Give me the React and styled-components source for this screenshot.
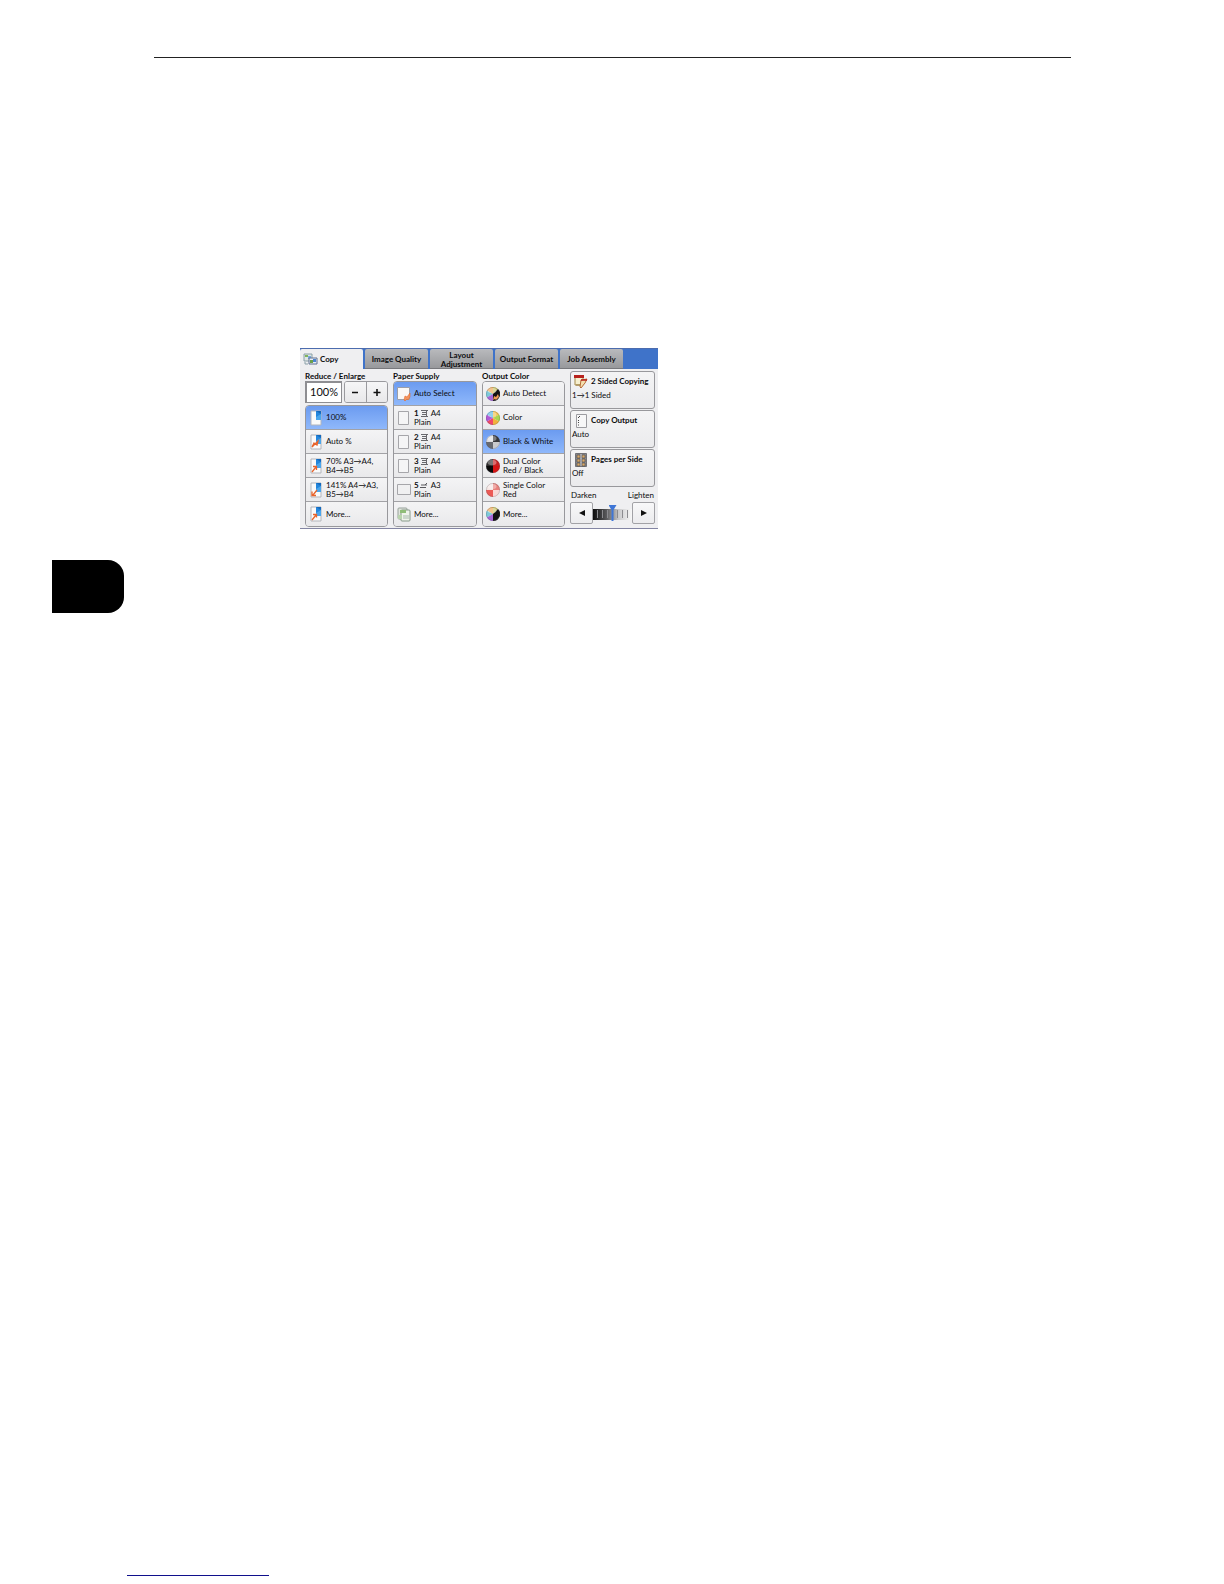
import { useState } from "react";
import styled, { createGlobalStyle, css } from "styled-components";

const GlobalStyle = createGlobalStyle`
  *,
  *::before,
  *::after {
    box-sizing: border-box;
  }

  body {
    margin: 0;
    background: #fff;
    color: #0c0c0e;
    font-family: "Lato", "Noto Sans", sans-serif;
  }

  button,
  input {
    margin: 0;
    font: inherit;
    color: inherit;
  }
`;

const Page = styled.div`
  display: flex;
  flex-direction: column;
  min-height: 100vh;
`;

const TopRule = styled.hr`
  align-self: stretch;
  height: 1px;
  margin: 57px 153px 0 154px;
  border: 0;
  background: #222;
`;

const Main = styled.main`
  flex: 1;
  padding-top: 290px;
`;

const ChapterTab = styled.aside`
  width: 72px;
  height: 53px;
  margin: 31px 0 0 52px;
  border-radius: 0 16px 16px 0;
  background: #000;
`;

const BottomRule = styled.hr`
  width: 142px;
  height: 1px;
  margin: 0 0 8px 127px;
  border: 0;
  background: #10108c;
`;

const Panel = styled.section`
  width: calc(100% - 300px);
  max-width: 358px;
  margin-left: 300px;
  border-top: 1px solid #4c6cae;
  border-bottom: 1px solid #8385a3;
  background: #efeff1;
  font-size: 8px;
  line-height: 9px;
`;

const TabBar = styled.div`
  display: flex;
  gap: 2px;
  background: #3f73c9;
`;

const Tab = styled.button`
  display: flex;
  align-items: center;
  justify-content: center;
  gap: 2px;
  width: 63px;
  height: 20px;
  padding: 2px 0 0;
  border: 0;
  border-bottom: 1px solid #77787c;
  border-radius: 2px 2px 0 0;
  background: linear-gradient(#b9babd, #98999c);
  font-weight: 700;

  ${(props) =>
    props.$active &&
    css`
      justify-content: flex-start;
      padding-left: 3px;
      border-bottom-color: #efeff1;
      background: #efeff1;
    `}
`;

const Body = styled.div`
  display: grid;
  grid-template-columns: 83px 84px 83px 1fr;
  gap: 5px;
  padding: 2px 3px 1px 5px;
`;

const Column = styled.div`
  display: flex;
  flex-direction: column;
  min-width: 0;
`;

const ColumnTitle = styled.h2`
  margin: 0;
  font-size: 8px;
  line-height: 10px;
  font-weight: 700;
  white-space: nowrap;
`;

const OptionList = styled.div`
  overflow: hidden;
  border: 1px solid #98989c;
  border-radius: 4px;
`;

const Option = styled.button`
  display: grid;
  grid-template-columns: 14px 1fr;
  align-items: center;
  gap: 3px;
  width: 100%;
  height: 24px;
  padding: 0 0 0 3px;
  border: 0;
  border-bottom: 1px solid #a2a2a6;
  background: linear-gradient(#f4f4f5, #e9e9eb);
  text-align: left;
  white-space: nowrap;

  &:last-child {
    border-bottom: 0;
  }

  ${(props) =>
    props.$selected &&
    css`
      background: linear-gradient(#6b9bf0, #8fb8fb);
    `}

  svg {
    display: block;
    justify-self: center;
  }
`;

const TrayLine = styled.span`
  display: flex;
  align-items: center;
  gap: 1px;
  font-weight: 700;
`;

const TraySize = styled.span`
  margin-left: 2px;
  font-weight: 400;
`;

const ZoomControls = styled.div`
  display: flex;
  gap: 2px;
  margin-bottom: 2px;
`;

const ZoomInput = styled.input`
  width: 37px;
  height: 22px;
  padding: 0 0 2px;
  border: 2px solid #8e8e92;
  border-right-width: 1px;
  border-bottom-width: 1px;
  background: #fff;
  font-size: 11px;
  text-align: center;
`;

const Stepper = styled.div`
  display: flex;
  flex: 1;
  overflow: hidden;
  border: 1px solid #9a9a9e;
  border-radius: 3px;
`;

const StepButton = styled.button`
  flex: 1;
  padding: 0;
  border: 0;
  background: linear-gradient(#f6f6f7, #e8e8ea);

  & + & {
    border-left: 1px solid #9a9a9e;
  }

  svg {
    display: block;
    margin: 0 auto;
  }
`;

const Cards = styled.div`
  display: flex;
  flex-direction: column;
  gap: 1px;
`;

const Card = styled.button`
  display: flex;
  flex-direction: column;
  gap: 2px;
  height: 38px;
  padding: 2px 1px;
  border: 1px solid #98989c;
  border-radius: 3px;
  background: linear-gradient(#f4f4f5, #ebebed);
  text-align: left;
  white-space: nowrap;
`;

const CardTitle = styled.span`
  display: flex;
  align-items: center;
  gap: 3px;
  height: 15px;
  padding-left: 2px;
  font-weight: 700;
`;

const DensityLabels = styled.div`
  display: flex;
  justify-content: space-between;
  margin: 4px 1px 2px;
`;

const Density = styled.div`
  display: flex;
  align-items: center;
`;

const DensityButton = styled.button`
  flex: none;
  width: 23px;
  height: 22px;
  padding: 0;
  border: 1px solid #a2a2a6;
  border-radius: 2px;
  background: linear-gradient(#f8f8f9, #ececee);

  svg {
    display: block;
    margin: 0 auto;
  }
`;

const DensitySlider = styled.input`
  appearance: none;
  flex: 1;
  min-width: 0;
  height: 16px;
  margin: 0;
  background:
    repeating-linear-gradient(90deg, transparent 0 4px, #8b8b8f 4px 5px) 0 5px / 100% 8px no-repeat,
    linear-gradient(90deg, #0c0c0c, #5a5a5c 35%, #c8c8ca 65%, #f8f8f8) 0 4px / 100% 11px no-repeat;

  &::-webkit-slider-thumb {
    appearance: none;
    width: 8px;
    height: 16px;
    background: #3f76d6;
    clip-path: polygon(0 0, 100% 0, 5px 5px, 5px 100%, 3px 100%, 3px 5px);
  }
`;

const CopyIcon = () => (
  <svg width="15" height="13" viewBox="0 0 15 13">
    <path d="M1 1h8v7H1z" fill="#dfe6e4" stroke="#8aa0a8" />
    <path d="M2 2h3v2H2z" fill="#7fb35b" />
    <path d="M5 3h3v3H5z" fill="#78a9df" />
    <path d="M6 5h8v6H6z" fill="#e9eef5" stroke="#60718f" />
    <path d="M7 7h3v3H7z" fill="#6da04b" />
    <path d="M10 6h3v3h-3z" fill="#4c86d3" />
    <path d="M2 9v2h3" fill="none" stroke="#8aa0a8" />
  </svg>
);

const arrows = {
  auto: "M2 13l2-4 1 1 3-3-1 4-2-1z",
  reduce: "M2 14l4-5M3 8.500h3.500v3.500",
  enlarge: "M7 8l-4 5M2 9.500v4h4",
  more: "M2 14l4-5M3 8.500h3.500v3",
};

const SizeIcon = ({ kind }) => (
  <svg width="12" height="16" viewBox="0 0 12 16">
    <path d="M1 1h10v14H1z" fill="#fafafa" stroke="#b3b5bb" />
    <path d="M6 1h5v9H6z" fill="#2486dc" />
    <path d="M6 1h5v3z" fill="#1469bd" />
    <path d="M6 7l5-3v6H6z" fill="#4aa6ec" />
    {kind && (
      <path d={arrows[kind]} fill={kind === "auto" ? "#f6a06c" : "none"} stroke="#e8642c" strokeWidth="1.3" />
    )}
  </svg>
);

const PaperIcon = ({ kind }) => {
  if (kind === "landscape") {
    return (
      <svg width="14" height="12" viewBox="0 0 14 12">
        <path d="M.5 .5h13v10H.5z" fill="#f0f0f1" stroke="#a6a6aa" />
      </svg>
    );
  }
  if (kind === "more") {
    return (
      <svg width="14" height="15" viewBox="0 0 14 15">
        <rect x="1" y="1" width="9" height="11" rx="1" fill="#dfe5dc" stroke="#97a09a" />
        <rect x="4" y="3" width="9" height="11" rx="1" fill="#eef3ea" stroke="#87998a" />
        <path d="M3 3h6v3H3z" fill="#8fbd78" />
        <path d="M6 9h6M6 11h6" stroke="#a9b9ae" />
        <path d="M1 8h4v4H1z" fill="#b9d4ad" />
      </svg>
    );
  }
  if (kind === "auto") {
    return (
      <svg width="14" height="16" viewBox="0 0 14 16">
        <path d="M.5 1.500h12v12H.5z" fill="#faf8f6" stroke="#9b9ea9" />
        <path d="M7 14l1-4 2 1 3-4v4l-2 3-1-1-2 2z" fill="#f4935c" stroke="#e46a2e" strokeWidth=".6" />
      </svg>
    );
  }
  return (
    <svg width="12" height="14" viewBox="0 0 12 14">
      <path d="M.5 .5h10v13H.5z" fill="#f5f5f6" stroke="#a6a6aa" />
    </svg>
  );
};

const TrayGlyph = ({ flat }) => (
  <svg width="8" height="7" viewBox="0 0 8 7">
    {flat ? (
      <path d="M1 3h6M0 5.500h6M7 1L5 3" stroke="#58585c" fill="none" />
    ) : (
      <path d="M1 .5h7M2 2.500h5M2 4.500h5M1 6.500h7M6.500 0v7" stroke="#68686c" fill="none" />
    )}
  </svg>
);

// quarters run clockwise from the top right
const pies = {
  bw: ["#36373b", "#c9cacd", "#67696f", "#dcdde0"],
  dual: ["#c82020", "#d81414", "#090909", "#2d2b2b"],
  single: ["#e8807c", "#f8d9d7", "#ec5a56", "#f6e4e2"],
};

const quarters = ["M7 7V0A7 7 0 0 1 14 7z", "M7 7h7A7 7 0 0 1 7 14z", "M7 7v7A7 7 0 0 1 0 7z", "M7 7H0A7 7 0 0 1 7 0z"];

const wedges = [
  ["M7 7V0A7 7 0 0 1 13.1 3.500z", "#f2c04c"],
  ["M7 7l6.100-3.500A7 7 0 0 1 13.100 10.500z", "#a8d650"],
  ["M7 7l6.100 3.500A7 7 0 0 1 7 14z", "#f2b23c"],
  ["M7 7v7A7 7 0 0 1 .9 10.500z", "#f0486a"],
  ["M7 7L.9 10.500A7 7 0 0 1 .9 3.500z", "#b05ad6"],
  ["M7 7L.9 3.500A7 7 0 0 1 7 0z", "#58b6e4"],
];

const darkHalf = [
  ["M7 7V0A7 7 0 0 0 .9 3.500z", "#f0a650"],
  ["M7 7L.9 3.500A7 7 0 0 0 .9 10.500z", "#7ec9d8"],
  ["M7 7L.9 10.500A7 7 0 0 0 7 14z", "#a666d8"],
  ["M7 7l5-5A7 7 0 0 0 7 0z", "#c9c468"],
  ["M7 7l5-5A7 7 0 0 1 7 14z", "#121214"],
];

const ColorIcon = ({ kind }) => {
  const parts = pies[kind]
    ? quarters.map((d, i) => [d, pies[kind][i]])
    : kind === "color"
      ? wedges
      : darkHalf;
  return (
    <svg width="14" height="14" viewBox="0 0 14 14">
      {parts.map(([d, fill]) => (
        <path key={d} d={d} fill={fill} />
      ))}
      {kind === "auto" && <path d="M7 13l1-4 2 1 2-3 1 3-3 3-1-1z" fill="#f09a55" />}
      <ellipse cx="6" cy="3.500" rx="4.500" ry="2.800" fill="#fff" opacity=".35" />
      <circle cx="7" cy="7" r="6.600" fill="none" stroke="#55565c" strokeWidth=".6" opacity=".4" />
    </svg>
  );
};

const CardIcon = ({ kind }) => {
  if (kind === "sided") {
    return (
      <svg width="14" height="14" viewBox="0 0 14 14">
        <path d="M1 1h8v9H1z" fill="#f6efcf" stroke="#a3894a" />
        <path d="M0 0h10v3H0z" fill="#b7221d" />
        <path d="M7 5l6-1-2 4-4 5-1-1z" fill="#f4dfae" stroke="#b76a36" />
        <path d="M7 5h6" stroke="#b7221d" strokeWidth="1.500" />
        <path d="M2 10h4" stroke="#9a7a3c" />
      </svg>
    );
  }
  if (kind === "output") {
    return (
      <svg width="14" height="14" viewBox="0 0 14 14">
        <path d="M2.500 .5h10v13h-10z" fill="#f7f7f8" stroke="#9c9ca1" />
        <path d="M4 4l2-2M4.500 6v1M4.500 8v1M4.500 10.500v1" stroke="#444" fill="none" />
      </svg>
    );
  }
  return (
    <svg width="14" height="14" viewBox="0 0 14 14">
      <path d="M1.500 .5h11v13h-11z" fill="#88888c" stroke="#727276" />
      {[2, 6, 10].map((y) => (
        <path key={y} d={`M3 ${y}h3v3H3zM8 ${y}h3v3H8z`} fill="#d8a868" stroke="#4b4b4f" strokeWidth=".6" />
      ))}
      <path d="M7 1v12" stroke="#c9c9cc" />
    </svg>
  );
};

const tabs = ["Copy", "Image Quality", "Layout Adjustment", "Output Format", "Job Assembly"];

const zoomOptions = [
  { id: "100", lines: ["100%"] },
  { id: "auto", icon: "auto", lines: ["Auto %"] },
  { id: "70", icon: "reduce", lines: ["70% A3→A4,", "B4→B5"] },
  { id: "141", icon: "enlarge", lines: ["141% A4→A3,", "B5→B4"] },
  { id: "more", icon: "more", lines: ["More..."] },
];

const paperOptions = [
  { id: "auto", icon: "auto", lines: ["Auto Select"] },
  { id: "1", tray: "1", size: "A4", lines: ["Plain"] },
  { id: "2", tray: "2", size: "A4", lines: ["Plain"] },
  { id: "3", tray: "3", size: "A4", lines: ["Plain"] },
  { id: "5", icon: "landscape", tray: "5", size: "A3", lines: ["Plain"] },
  { id: "more", icon: "more", lines: ["More..."] },
];

const colorOptions = [
  { id: "auto", icon: "auto", lines: ["Auto Detect"] },
  { id: "color", icon: "color", lines: ["Color"] },
  { id: "bw", icon: "bw", lines: ["Black & White"] },
  { id: "dual", icon: "dual", lines: ["Dual Color", "Red / Black"] },
  { id: "single", icon: "single", lines: ["Single Color", "Red"] },
  { id: "more", icon: "more", lines: ["More..."] },
];

const cards = [
  { icon: "sided", title: "2 Sided Copying", value: "1→1 Sided" },
  { icon: "output", title: "Copy Output", value: "Auto" },
  { icon: "pages", title: "Pages per Side", value: "Off" },
];

const Options = ({ options, Icon, initial }) => {
  const [selected, setSelected] = useState(initial);

  return (
    <OptionList>
      {options.map((option) => (
        <Option
          key={option.id}
          type="button"
          $selected={selected === option.id}
          aria-pressed={selected === option.id}
          onClick={() => setSelected(option.id)}
        >
          <Icon kind={option.icon} />
          <span>
            {option.tray && (
              <TrayLine>
                {option.tray}
                <TrayGlyph flat={option.icon === "landscape"} />
                <TraySize>{option.size}</TraySize>
              </TrayLine>
            )}
            {option.lines.map((line) => (
              <div key={line}>{line}</div>
            ))}
          </span>
        </Option>
      ))}
    </OptionList>
  );
};

const App = () => {
  const [activeTab, setActiveTab] = useState("Copy");
  const [zoom, setZoom] = useState(100);
  const [density, setDensity] = useState(0);

  return (
    <>
      <GlobalStyle />
      <Page>
        <TopRule />
        <Main>
          <Panel>
            <TabBar role="tablist">
              {tabs.map((tab) => (
                <Tab
                  key={tab}
                  type="button"
                  role="tab"
                  aria-selected={activeTab === tab}
                  $active={activeTab === tab}
                  onClick={() => setActiveTab(tab)}
                >
                  {tab === "Copy" && <CopyIcon />}
                  {tab}
                </Tab>
              ))}
            </TabBar>
            <Body>
              <Column>
                <ColumnTitle as="label" htmlFor="zoom">
                  Reduce / Enlarge
                </ColumnTitle>
                <ZoomControls>
                  <ZoomInput
                    id="zoom"
                    value={`${zoom}%`}
                    onChange={(e) => setZoom(parseInt(e.target.value, 10) || 0)}
                  />
                  <Stepper>
                    <StepButton type="button" aria-label="Smaller" onClick={() => setZoom(zoom - 1)}>
                      <svg width="8" height="8" viewBox="0 0 8 8">
                        <path d="M1 4.500h6" stroke="#111" strokeWidth="1.600" />
                      </svg>
                    </StepButton>
                    <StepButton type="button" aria-label="Larger" onClick={() => setZoom(zoom + 1)}>
                      <svg width="8" height="8" viewBox="0 0 8 8">
                        <path d="M.5 4.500h7M4 1v7" stroke="#111" strokeWidth="1.600" />
                      </svg>
                    </StepButton>
                  </Stepper>
                </ZoomControls>
                <Options options={zoomOptions} Icon={SizeIcon} initial="100" />
              </Column>
              <Column>
                <ColumnTitle>Paper Supply</ColumnTitle>
                <Options options={paperOptions} Icon={PaperIcon} initial="auto" />
              </Column>
              <Column>
                <ColumnTitle>Output Color</ColumnTitle>
                <Options options={colorOptions} Icon={ColorIcon} initial="bw" />
              </Column>
              <Column>
                <Cards>
                  {cards.map((card) => (
                    <Card key={card.title} type="button">
                      <CardTitle>
                        <CardIcon kind={card.icon} />
                        {card.title}
                      </CardTitle>
                      <span>{card.value}</span>
                    </Card>
                  ))}
                </Cards>
                <DensityLabels>
                  <label htmlFor="density">Darken</label>
                  <span>Lighten</span>
                </DensityLabels>
                <Density>
                  <DensityButton
                    type="button"
                    aria-label="Darker"
                    onClick={() => setDensity(Math.max(-3, density - 1))}
                  >
                    <svg width="6" height="6" viewBox="0 0 6 6">
                      <path d="M6 0v6L0 3z" fill="#111" />
                    </svg>
                  </DensityButton>
                  <DensitySlider
                    id="density"
                    type="range"
                    min="-3"
                    max="3"
                    value={density}
                    onChange={(e) => setDensity(Number(e.target.value))}
                  />
                  <DensityButton
                    type="button"
                    aria-label="Lighter"
                    onClick={() => setDensity(Math.min(3, density + 1))}
                  >
                    <svg width="6" height="6" viewBox="0 0 6 6">
                      <path d="M0 0v6l6-3z" fill="#111" />
                    </svg>
                  </DensityButton>
                </Density>
              </Column>
            </Body>
          </Panel>
          <ChapterTab />
        </Main>
        <BottomRule />
      </Page>
    </>
  );
};

export default App;
